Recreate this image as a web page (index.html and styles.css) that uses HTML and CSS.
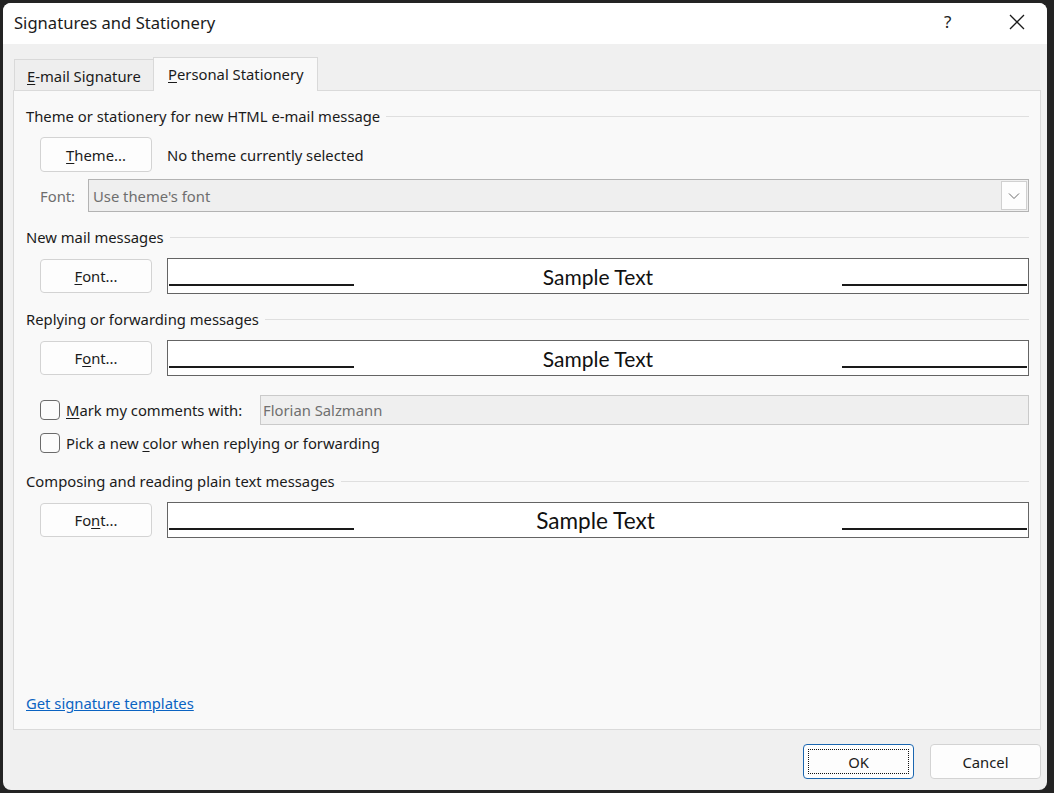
FILE: index.html
```html
<!DOCTYPE html>
<html>
<head>
<meta charset="utf-8">
<link rel="stylesheet" href="styles.css">
</head>
<body>
<div class="window">
  <div class="titlebar">
    <div class="title">Signatures and Stationery</div>
    <div class="help">?</div>
    <div class="close">
      <svg width="16" height="16" viewBox="0 0 16 16"><path d="M1 1 L15 15 M15 1 L1 15" stroke="#1a1a1a" stroke-width="1.3" fill="none"/></svg>
    </div>
  </div>
  <div class="body">
    <div class="tabs">
      <div class="tab"><span><u>E</u>-mail Signature</span></div>
      <div class="tab active"><span><u>P</u>ersonal Stationery</span></div>
    </div>
    <div class="panel">
      <div class="heading h1"><span>Theme or stationery for new HTML e-mail message</span><i></i></div>
      <div class="row theme-row">
        <button class="btn"><span><u>T</u>heme...</span></button>
        <span class="text">No theme currently selected</span>
      </div>
      <div class="row font-row">
        <span class="label">Font:</span>
        <div class="combo">
          <span>Use theme's font</span>
          <div class="drop"><svg width="12" height="8" viewBox="0 0 12 8"><path d="M1 1.5 L6 6.5 L11 1.5" stroke="#6a6a6a" stroke-width="1" fill="none"/></svg></div>
        </div>
      </div>
      <div class="heading h2"><span>New mail messages</span><i></i></div>
      <div class="row sample-row">
        <button class="btn"><span><u>F</u>ont...</span></button>
        <div class="sample"><b class="ln"></b><span class="st">Sample Text</span><b class="ln"></b></div>
      </div>
      <div class="heading h2"><span>Replying or forwarding messages</span><i></i></div>
      <div class="row sample-row">
        <button class="btn"><span>F<u>o</u>nt...</span></button>
        <div class="sample"><b class="ln"></b><span class="st">Sample Text</span><b class="ln"></b></div>
      </div>
      <div class="row check-row1">
        <span class="check"></span>
        <span class="text mark"><u>M</u>ark my comments with:</span>
        <div class="input">Florian Salzmann</div>
      </div>
      <div class="row check-row2">
        <span class="check"></span>
        <span class="text">Pick a new <u>c</u>olor when replying or forwarding</span>
      </div>
      <div class="heading h4"><span>Composing and reading plain text messages</span><i></i></div>
      <div class="row sample-row">
        <button class="btn"><span>Fo<u>n</u>t...</span></button>
        <div class="sample plain"><b class="ln"></b><span class="st">Sample Text</span><b class="ln"></b></div>
      </div>
      <a class="link" href="#">Get signature templates</a>
    </div>
    <div class="footer">
      <button class="btn ok"><span class="focus">OK</span></button>
      <button class="btn cancel"><span>Cancel</span></button>
    </div>
  </div>
</div>
</body>
</html>
```

FILE: styles.css
```css
html, body {
  margin: 0;
  padding: 0;
}
body {
  width: 1054px;
  height: 793px;
  background: #232323;
  font-family: "Noto Sans", "Open Sans", sans-serif;
  font-size: 14.8px;
  color: #1b1b1b;
  overflow: hidden;
}
u { text-decoration: underline; text-underline-offset: 2px; }
.window {
  margin: 3px 0 0 3px;
  width: 1044px;
  height: 787px;
  border-radius: 8px;
  background: #f0f0f0;
  overflow: hidden;
  display: flex;
  flex-direction: column;
}
.titlebar {
  height: 41px;
  background: #ffffff;
  display: flex;
  align-items: center;
  padding-left: 11px;
}
.title {
  font-size: 16.6px;
  flex: 1;
  margin-top: -2px;
}
.help {
  font-size: 17px;
  width: 20px;
  margin-right: 45px;
  margin-top: -4px;
  color: #222;
}
.close {
  width: 16px;
  height: 16px;
  margin-right: 22px;
  margin-top: -4px;
}
.close svg { display: block; }
.body {
  flex: 1;
  display: flex;
  flex-direction: column;
  padding: 13px 0 0 10px;
}
.tabs {
  display: flex;
  align-items: flex-end;
  height: 33px;
  margin-left: 1px;
}
.tab {
  height: 32px;
  box-sizing: border-box;
  padding: 0 0 0 12px;
  border: 1px solid #d9d9d9;
  border-bottom: none;
  background: #eeeeee;
  display: flex;
  align-items: center;
  margin-bottom: -1px;
  white-space: nowrap;
}
.tab:first-child { width: 139px; border-right: none; }
.tab.active {
  height: 34px;
  width: 165px;
  background: #f9f9f9;
  position: relative;
  z-index: 1;
  padding-left: 14px;
  padding-bottom: 2px;
}
.panel {
  width: 1028px;
  height: 640px;
  box-sizing: border-box;
  border: 1px solid #dadada;
  background: #f9f9f9;
  padding: 0 11px 0 12px;
  display: flex;
  flex-direction: column;
}
.heading {
  height: 20px;
  display: flex;
  align-items: center;
  white-space: nowrap;
}
.heading i {
  flex: 1;
  height: 1px;
  background: #dfdfdf;
  margin-left: 6px;
}
.h1 { margin-top: 15px; }
.h2 { margin-top: 15px; }
.h4 { margin-top: 18px; }
.row {
  display: flex;
  align-items: center;
  padding-left: 14px;
  white-space: nowrap;
}
.btn {
  font-family: inherit;
  font-size: 14.8px;
  color: #1b1b1b;
  width: 112px;
  height: 35px;
  box-sizing: border-box;
  background: #fdfdfd;
  border: 1px solid #d3d3d3;
  border-radius: 4px;
  padding: 0;
  display: flex;
  align-items: center;
  justify-content: center;
  flex: none;
}
.theme-row { margin-top: 11px; height: 35px; }
.theme-row .text { margin-left: 15px; }
.font-row { margin-top: 7px; height: 33px; }
.label { color: #6e6e6e; width: 48px; }
.combo {
  flex: 1;
  height: 33px;
  box-sizing: border-box;
  border: 1px solid #b3b3b3;
  background: #efefef;
  display: flex;
  align-items: center;
  padding-left: 4px;
  color: #6e6e6e;
}
.combo span { flex: 1; }
.drop {
  width: 26px;
  height: 29px;
  box-sizing: border-box;
  background: #fdfdfd;
  border: 1px solid #d0d0d0;
  display: flex;
  align-items: center;
  justify-content: center;
  margin-right: 1px;
}
.sample-row { margin-top: 11px; height: 36px; }
.sample-row .btn { height: 34px; }
.sample {
  margin-left: 15px;
  flex: 1;
  height: 36px;
  box-sizing: border-box;
  border: 1px solid #646464;
  background: #ffffff;
  display: flex;
  align-items: center;
  padding: 0 1px;
}
.ln {
  width: 185px;
  height: 2px;
  background: #1a1a1a;
  align-self: flex-start;
  margin-top: 25px;
}
.st {
  flex: 1;
  text-align: center;
  font-family: "Lato", "Open Sans", sans-serif;
  font-size: 21px;
  color: #111;
}
.plain .st { font-size: 22.6px; padding-right: 5px; }
.check-row1 { margin-top: 19px; height: 30px; }
.check-row2 { margin-top: 8px; height: 20px; }
.check {
  width: 20px;
  height: 20px;
  box-sizing: border-box;
  border: 1px solid #6b6b6b;
  border-radius: 4px;
  background: #fcfcfc;
  margin-right: 6px;
  flex: none;
}
.mark { width: 194px; }
.input {
  flex: 1;
  height: 30px;
  box-sizing: border-box;
  border: 1px solid #cacaca;
  background: #efefef;
  color: #707070;
  display: flex;
  align-items: center;
  padding-left: 2px;
  margin-top: -1px;
}
.link {
  margin-top: auto;
  margin-bottom: 16px;
  color: #0a63c2;
  text-decoration: underline;
  height: 20px;
  line-height: 20px;
  align-self: flex-start;
}
.footer {
  display: flex;
  justify-content: flex-end;
  gap: 16px;
  padding: 14px 6px 0 0;
}
.footer .btn { width: 111px; height: 35px; }
.ok {
  border-color: #1a66b0;
  position: relative;
}
.ok .focus {
  position: absolute;
  left: 4px;
  right: 4px;
  top: 4px;
  bottom: 4px;
  border: 1px dotted #111;
  display: flex;
  align-items: center;
  justify-content: center;
}
```
